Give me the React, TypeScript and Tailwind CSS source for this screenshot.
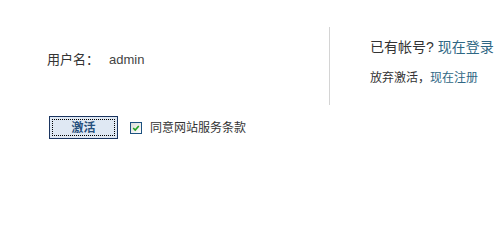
export default function App() {
  return (
    <div className="w-[502px] h-[204px] bg-white text-[#333] font-['Liberation_Sans','Noto_Sans_CJK_SC',sans-serif] pt-[27px]">
      <div className="flex">
        <div className="w-[330px] h-[78px] border-r border-[#d4d4d4] pl-[47px] pt-[23px]">
          <div className="flex items-center text-[13px] leading-[20px]">
            <span>用户名：</span>
            <span className="ml-[10px] text-[#444]">admin</span>
          </div>
        </div>
        <div className="pl-[40px] pt-[10px]">
          <p className="text-[14px] leading-[20px] whitespace-nowrap">
            已有帐号? <a href="#" className="text-[#2f6784]">现在登录</a>
          </p>
          <p className="mt-[12px] text-[12px] leading-[18px] whitespace-nowrap">
            放弃激活，<a href="#" className="text-[#2f6784]">现在注册</a>
          </p>
        </div>
      </div>

      <div className="flex items-center mt-[11px] pl-[49px]">
        <button className="w-[69px] h-[23px] border border-[#1b3560] bg-[#dfe8f3] p-[2px]">
          <span className="flex h-full w-full items-center justify-center border border-dotted border-black text-[12px] font-bold text-[#264f7c]">
            激活
          </span>
        </button>
        <label className="flex items-center ml-[12px] text-[12px] leading-[18px]">
          <span className="flex items-center justify-center w-[12px] h-[12px] border border-[#1c5180] bg-gradient-to-br from-[#dcdcd7] to-white">
            <svg viewBox="0 0 10 10" className="w-[8px] h-[8px]">
              <path d="M1.5 5 L4 7.5 L8.5 2.5" fill="none" stroke="#21a121" strokeWidth="2" />
            </svg>
          </span>
          <span className="ml-[8px]">同意网站服务条款</span>
        </label>
      </div>
    </div>
  );
}
